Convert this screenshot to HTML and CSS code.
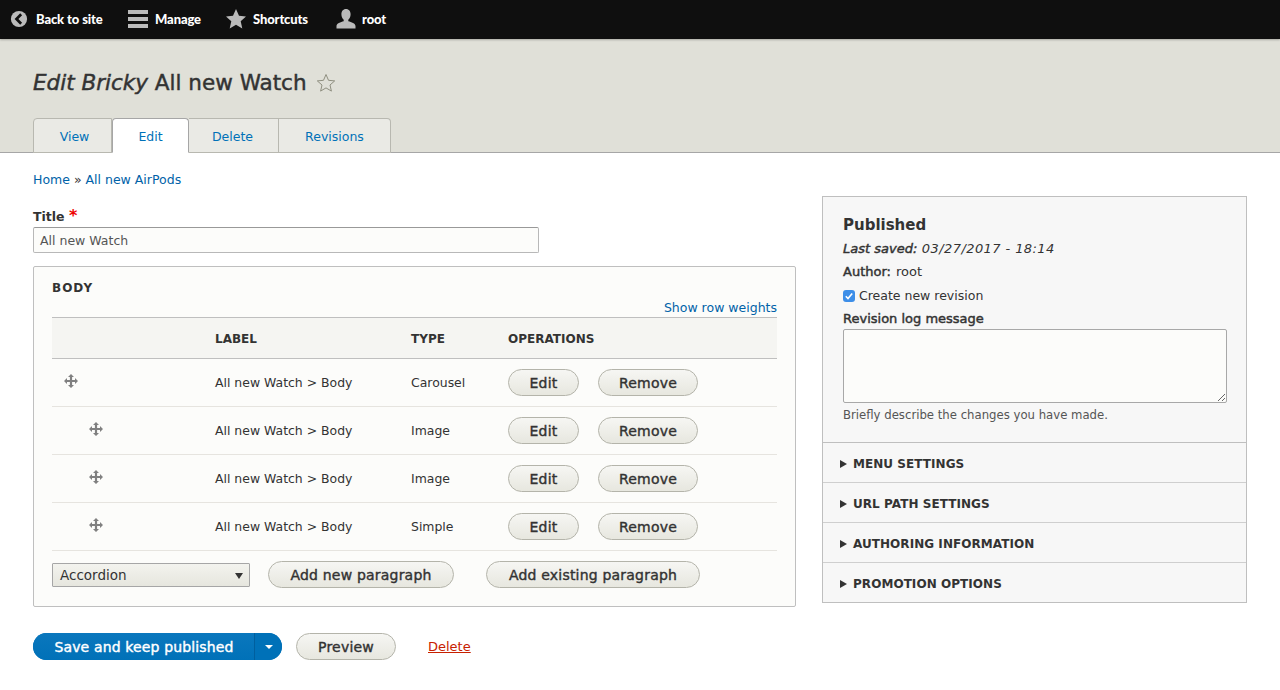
FILE: index.html
```html
<!DOCTYPE html>
<html lang="en">
<head>
<meta charset="utf-8">
<title>Edit Bricky All new Watch</title>
<link rel="stylesheet" href="styles.css">
</head>
<body>
<nav class="toolbar">
  <a class="tool tool-back"><svg class="ti" width="20" height="20" viewBox="0 0 20 20"><circle cx="10" cy="10" r="9" fill="#bbb"/><path d="M12.4 4.8 7.2 10l5.200 5.200" fill="none" stroke="#0f0f0f" stroke-width="3"/></svg>Back to site</a>
  <a class="tool tool-manage"><svg class="ti" width="20" height="20" viewBox="0 0 20 20"><path d="M0 1h20v4H0zM0 8h20v4H0zM0 15h20v4H0z" fill="#bbb"/></svg>Manage</a>
  <a class="tool tool-short"><svg class="ti" width="20" height="20" viewBox="0 0 20 20"><path d="M10 0l3 6.800 7 .7-5.300 4.700 1.600 7.300L10 15.800 3.700 19.500l1.600-7.300L0 7.500l7-.7z" fill="#bbb"/></svg>Shortcuts</a>
  <a class="tool tool-user"><svg class="ti" width="20" height="20" viewBox="0 0 20 20"><path d="M10 0c3 0 4.600 2.300 4.600 5.300 0 2.300-1 4.300-2.300 5.400v1.500c3 .8 7.200 2.200 7.200 4.800v2.500H.5V17c0-2.600 4.200-4 7.200-4.800v-1.500C6.400 9.600 5.400 7.600 5.400 5.300 5.400 2.300 7 0 10 0z" fill="#bbb"/></svg>root</a>
</nav>
<header class="page-head">
  <h1 class="title"><em>Edit Bricky</em> All new Watch <svg class="fav" width="20" height="20" viewBox="0 0 20 20"><path d="M10 1.500l2.500 5.800 6.200.6-4.700 4.100 1.400 6.100-5.400-3.200-5.400 3.200 1.400-6.100L1.300 7.900l6.200-.6z" fill="none" stroke="#8f8f80" stroke-width="1"/></svg></h1>
  <ul class="tabs">
    <li class="tab tab-view"><a>View</a></li>
    <li class="tab tab-edit active"><a>Edit</a></li>
    <li class="tab tab-delete"><a>Delete</a></li>
    <li class="tab tab-rev"><a>Revisions</a></li>
  </ul>
</header>
<main class="content">
  <div class="crumbs"><a>Home</a> » <a>All new AirPods</a></div>
  <div class="layout">
    <div class="col-main">
      <label class="field-label">Title <span class="req">*</span></label>
      <div class="text-input">All new Watch</div>
      <section class="fieldset">
        <div class="legend">BODY</div>
        <div class="weights"><a>Show row weights</a></div>
        <table class="grid">
          <thead><tr><th class="c-drag"></th><th class="c-label">LABEL</th><th class="c-type">TYPE</th><th>OPERATIONS</th></tr></thead>
          <tbody>
            <tr><td class="c-drag"><svg class="drag" width="14" height="14" viewBox="0 0 14 14"><use href="#move"/></svg></td><td>All new Watch &gt; Body</td><td>Carousel</td><td><div class="ops"><button class="btn b-edit">Edit</button><button class="btn b-remove">Remove</button></div></td></tr>
            <tr><td class="c-drag"><svg class="drag indent" width="14" height="14" viewBox="0 0 14 14"><use href="#move"/></svg></td><td>All new Watch &gt; Body</td><td>Image</td><td><div class="ops"><button class="btn b-edit">Edit</button><button class="btn b-remove">Remove</button></div></td></tr>
            <tr><td class="c-drag"><svg class="drag indent" width="14" height="14" viewBox="0 0 14 14"><use href="#move"/></svg></td><td>All new Watch &gt; Body</td><td>Image</td><td><div class="ops"><button class="btn b-edit">Edit</button><button class="btn b-remove">Remove</button></div></td></tr>
            <tr><td class="c-drag"><svg class="drag indent" width="14" height="14" viewBox="0 0 14 14"><use href="#move"/></svg></td><td>All new Watch &gt; Body</td><td>Simple</td><td><div class="ops"><button class="btn b-edit">Edit</button><button class="btn b-remove">Remove</button></div></td></tr>
          </tbody>
        </table>
        <div class="add-row">
          <div class="select">Accordion<span class="caret"></span></div>
          <button class="btn b-new">Add new paragraph</button>
          <button class="btn b-exist">Add existing paragraph</button>
        </div>
      </section>
      <div class="actions">
        <div class="split"><button class="save">Save and keep published</button><button class="save-more"><span class="w-caret"></span></button></div>
        <button class="btn b-preview">Preview</button>
        <a class="del">Delete</a>
      </div>
    </div>
    <aside class="side">
      <div class="meta">
        <h2 class="status">Published</h2>
        <div class="saved"><span class="strong">Last saved:</span> 03/27/2017 - 18:14</div>
        <div class="author"><span class="strong">Author:</span> root</div>
        <label class="check"><span class="box"><svg width="12" height="12" viewBox="0 0 12 12"><path d="M2.800 6.200 5 8.500l4.200-5" fill="none" stroke="#fff" stroke-width="1.600"/></svg></span>Create new revision</label>
        <div class="log-label">Revision log message</div>
        <div class="textarea"><svg class="grip" width="9" height="9" viewBox="0 0 9 9"><path d="M1 8l7-7M5 8l3-3" stroke="#666" stroke-width="1"/></svg></div>
        <div class="hint">Briefly describe the changes you have made.</div>
      </div>
      <div class="acc"><span class="tri"></span>MENU SETTINGS</div>
      <div class="acc"><span class="tri"></span>URL PATH SETTINGS</div>
      <div class="acc"><span class="tri"></span>AUTHORING INFORMATION</div>
      <div class="acc"><span class="tri"></span>PROMOTION OPTIONS</div>
    </aside>
  </div>
</main>
<svg class="defs" width="0" height="0"><defs><g id="move"><path d="M7 0l3 3H8.100v2.900H11V4l3 3-3 3V8.100H8.100V11H10l-3 3-3-3h1.900V8.100H3V10L0 7l3-3v1.900h2.900V3H4z" fill="#808080"/></g></defs></svg>
</body>
</html>
```
FILE: styles.css
```css
* { box-sizing: border-box; }
html, body { margin: 0; padding: 0; background: #fff; height: 690px; overflow: hidden; }
body { font-family: "DejaVu Sans", sans-serif; font-size: 12.500px; color: #333; }
a { color: #0062a8; }
.defs { position: absolute; }

.toolbar { height: 39px; background: #0f0f0f; display: flex; align-items: center; padding: 0 0 2px 10px; box-shadow: 0 1px 2px rgba(0,0,0,.25); position: relative; }
.tool { display: flex; align-items: center; color: #fff; font-family: Lato, sans-serif; font-weight: 900; font-size: 13px; letter-spacing: -.12px; }
.ti { margin-right: 8px; flex: none; }
.tool-back { width: 118px; }
.tool-back .ti { width: 18px; height: 18px; }
.tool-manage { width: 98px; }
.tool-manage .ti { margin-right: 7px; }
.tool-short { width: 110px; }
.tool-short .ti { margin-right: 7px; }
.tool-user .ti { margin-right: 6px; }

.page-head { height: 114px; background: #e0e0d8; border-bottom: 1px solid #a6a6a6; padding: 31px 33px 0; display: flex; flex-direction: column; }
.title { margin: 0; height: 26px; font-size: 21.500px; line-height: 26px; font-weight: 400; color: #333; display: flex; align-items: center; white-space: pre; -webkit-text-stroke: .45px #333; }
.title em { font-style: oblique; }
.fav { margin-left: 3px; }
.tabs { list-style: none; margin: 22px 0 0; padding: 0; display: flex; height: 35px; }
.tab { height: 35px; background: #eaeae5; border: 1px solid #b8b8b0; border-left-width: 0; display: flex; align-items: center; justify-content: center; font-size: 12.500px; padding-top: 2px; }
.tab a { color: #0071b8; }
.tab-view { width: 79px; border-left-width: 1px; border-top-left-radius: 4px; padding-left: 4px; }
.tab-edit { width: 77px; background: #fff; border-color: #a6a6a6; border-left-width: 1px; border-bottom-color: #fff; border-top-left-radius: 4px; border-top-right-radius: 4px; }
.tab-delete { width: 90px; padding-right: 2px; }
.tab-rev { width: 112px; border-top-right-radius: 4px; }

.content { padding: 0 33px; }
.crumbs { padding-top: 19px; height: 43px; line-height: 16px; color: #333; }
.layout { display: flex; gap: 26px; align-items: flex-start; }
.col-main { width: 763px; }
.side { width: 425px; border: 1px solid #bfbfbf; background: #f7f7f7; }

.field-label { display: block; font-weight: 700; font-size: 12.500px; line-height: 18px; height: 19px; margin-top: 12px; }
.req { color: #e00; font-size: 16px; line-height: 14px; }
.text-input { width: 506px; height: 26px; border: 1px solid #b8b8b8; border-top-color: #999; border-radius: 2px; background: #fcfcfa; font-size: 12.500px; line-height: 26px; padding-left: 6px; color: #555; }
.fieldset { margin-top: 13px; height: 341px; background: #fcfcfa; border: 1px solid #bfbfbf; border-radius: 2px; padding: 0 18px; }
.legend { font-weight: 700; font-size: 12px; letter-spacing: 1px; line-height: 16px; padding-top: 13px; height: 29px; }
.weights { text-align: right; height: 21px; line-height: 24px; }
.grid { border-collapse: collapse; width: 725px; table-layout: fixed; font-size: 12.450px; }
.grid th { height: 41px; background: #f5f5f2; border-top: 1px solid #bfbfbf; border-bottom: 1px solid #bfbfbf; text-align: left; font-size: 12px; padding: 2px 0 0; }
.grid td { height: 48px; border-bottom: 1px solid #e6e4df; padding: 0; color: #333; }
.c-drag { width: 163px; }
.c-label { width: 196px; }
.c-type { width: 97px; }
.drag { display: block; margin: -4px 0 0 12px; }
.drag.indent { margin-left: 37px; }
.ops { display: flex; gap: 19px; }
.btn { height: 27px; border: 1px solid #b4b4aa; border-radius: 14px; background: linear-gradient(#f6f6f3, #e7e7df); color: #333; font-family: "DejaVu Sans", sans-serif; font-weight: 400; font-size: 14px; padding: 0; letter-spacing: .2px; -webkit-text-stroke: .4px #333; }
.b-edit { width: 71px; }
.b-remove { width: 100px; }
.add-row { display: flex; align-items: center; padding-top: 10px; }
.select { width: 198px; height: 24px; border: 1px solid #a6a6a6; border-radius: 1px; background: linear-gradient(#f3f3ee, #e6e6de); padding-left: 7px; line-height: 22px; font-size: 13.500px; color: #333; position: relative; }
.caret { position: absolute; right: 6px; top: 9px; border: 4.500px solid transparent; border-top: 6px solid #333; border-bottom: 0; }
.b-new { width: 186px; margin-left: 18px; }
.b-exist { width: 214px; margin-left: 32px; }

.actions { display: flex; align-items: center; margin-top: 26px; }
.split { display: flex; width: 249px; height: 27px; border-radius: 14px; overflow: hidden; background: #0071b8; }
.save { width: 222px; height: 27px; padding: 0 0 0 1px; border: 0; border-right: 1px solid #005f9e; background: linear-gradient(#0a77bd, #0071b8); color: #fff; font-family: "DejaVu Sans", sans-serif; font-weight: 400; font-size: 14px; letter-spacing: .14px; -webkit-text-stroke: .4px #fff; }
.save-more { flex: 1; border: 0; background: #0071b8; padding: 0; display: flex; justify-content: center; align-items: center; }
.w-caret { border: 4px solid transparent; border-top: 4px solid #fff; border-bottom: 0; }
.b-preview { width: 100px; margin-left: 14px; }
.del { margin-left: 32px; color: #c72100; text-decoration: underline; font-size: 13px; }

.strong { -webkit-text-stroke: .45px #333; }
.meta { padding: 17px 20px 0; height: 246px; border-bottom: 1px solid #bfbfbf; }
.status { margin: 0; font-size: 15px; line-height: 22px; font-weight: 700; color: #333; }
.saved { font-style: oblique; font-size: 13px; line-height: 18px; margin-top: 4px; letter-spacing: .42px; }
.saved .strong { letter-spacing: 0; }
.author { line-height: 18px; margin-top: 5px; font-size: 13px; }
.author .strong { margin-right: 1px; }
.check { display: flex; align-items: center; line-height: 18px; margin-top: 6px; }
.box { width: 12px; height: 12px; background: #3d8ee8; border-radius: 3px; margin-right: 4px; display: flex; }
.log-label { font-size: 13px; line-height: 18px; margin-top: 5px; -webkit-text-stroke: .45px #333; }
.textarea { width: 384px; height: 74px; margin-top: 1px; background: #fcfcfa; border: 1px solid #a8a8a8; border-radius: 2px; position: relative; }
.grip { position: absolute; right: 0; bottom: 0; }
.hint { font-size: 11.700px; line-height: 16px; margin-top: 4px; color: #555; }
.acc { height: 40px; border-bottom: 1px solid #cfcfcf; display: flex; align-items: center; padding: 3px 0 0 17px; font-weight: 700; font-size: 12px; letter-spacing: .05px; color: #333; }
.acc:last-child { border-bottom: 0; height: 39px; }
.tri { width: 0; height: 0; border: 4px solid transparent; border-left: 7px solid #333; border-right: 0; margin-right: 6px; }
```
